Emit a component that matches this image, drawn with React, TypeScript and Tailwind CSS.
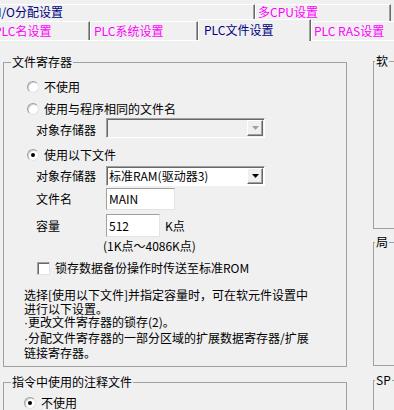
import React from "react";

const FONT = { fontFamily: '"Noto Sans CJK SC", "Noto Sans", sans-serif' };

function Radio({ checked }: { checked?: boolean }) {
  return (
    <span className="relative inline-block h-[12px] w-[12px] shrink-0 rounded-full border border-t-[#a0a0a0] border-l-[#a0a0a0] border-b-[#e3e3e3] border-r-[#e3e3e3] bg-white shadow-[inset_1px_1px_0_#d0d0d0]">
      {checked && <span className="absolute left-[3px] top-[3px] h-[4px] w-[4px] rounded-full bg-black" />}
    </span>
  );
}

function Combo({ text, disabled }: { text?: string; disabled?: boolean }) {
  return (
    <div
      className={
        "flex h-[20px] w-[159px] items-center border border-t-[#a0a0a0] border-l-[#a0a0a0] border-b-white border-r-white shadow-[inset_1px_1px_0_#696969] " +
        (disabled ? "bg-[#f0f0f0]" : "bg-white")
      }
    >
      <span className="flex-1 pl-[2px] text-[12px] leading-[14px]">{text}</span>
      <span className="mr-[1px] flex h-[16px] w-[16px] items-center justify-center border border-t-white border-l-white border-b-[#696969] border-r-[#696969] bg-[#f0f0f0] shadow-[inset_-1px_-1px_0_#a0a0a0]">
        <svg width="7" height="4" viewBox="0 0 7 4">
          <polygon points="0,0 7,0 3.5,4" fill={disabled ? "#a0a0a0" : "#000"} />
        </svg>
      </span>
    </div>
  );
}

function Input({ text, w, h }: { text: string; w: string; h: string }) {
  return (
    <div className={"flex items-center border border-t-[#a0a0a0] border-l-[#a0a0a0] border-b-[#e3e3e3] border-r-[#e3e3e3] bg-white pl-[2px] text-[12px] leading-[14px] " + w + " " + h}>
      {text}
    </div>
  );
}

function Group({ title, className, titleClass, children }: { title: string; className: string; titleClass?: string; children?: React.ReactNode }) {
  return (
    <div className={"relative shrink-0 border border-[#a0a0a0] " + className}>
      <span className={"absolute top-[-9px] bg-[#f0f0f0] px-[1px] text-[12px] leading-[16px] text-black whitespace-nowrap " + (titleClass ?? "left-[7px]")}>{title}</span>
      {children}
    </div>
  );
}

const tabBase =
  "flex items-end shrink-0 border-t border-l border-t-white border-l-white border-r border-r-[#696969] shadow-[inset_-1px_0_0_#a0a0a0] bg-[#f0f0f0] text-[12px] leading-[16px] whitespace-nowrap pb-[1px]";

export default function App() {
  return (
    <div className="relative h-[410px] w-[394px] overflow-hidden bg-[#f0f0f0] text-black" style={FONT}>
      {/* tabs */}
      <div className="h-[4px]" />
      <div className="flex h-[17px]">
        <div className={tabBase + " ml-[-8px] w-[263px] pl-[5px] text-[#000080]"}>I/O分配设置</div>
        <div className={tabBase + " w-[136px] pl-[2px] text-[#ff00ff]"}>多CPU设置</div>
      </div>
      <div className="relative flex h-[19px]">
        <div className={tabBase + " ml-[-10px] w-[100px] pl-[3px] text-[#ff00ff]"}>PLC名设置</div>
        <div className={tabBase + " w-[108px] pl-[3px] text-[#ff00ff]"}>PLC系统设置</div>
        <div className={tabBase + " relative z-10 mt-[-2px] h-[22px] w-[113px] pl-[5px] pb-[3px] text-[#000080]"}>PLC文件设置</div>
        <div className={tabBase + " w-[100px] pl-[2px] text-[#ff00ff]"}>PLC RAS设置</div>
      </div>
      <div className="h-[1px] bg-white" />

      {/* content */}
      <div className="flex gap-[26px] pl-[3px]">
        <div className="flex w-[344px] shrink-0 flex-col">
          <Group title="文件寄存器" className="mt-[21px] h-[305px] w-[344px]">
            <div className="flex flex-col pt-[15px] text-[12px]">
              <div className="ml-[23px] flex h-[18px] items-center gap-[5px]">
                <Radio />
                <span className="leading-[14px]">不使用</span>
              </div>
              <div className="ml-[23px] mt-[4px] flex h-[18px] items-center gap-[5px]">
                <Radio />
                <span className="leading-[14px]">使用与程序相同的文件名</span>
              </div>
              <div className="ml-[32px] flex h-[20px] items-center">
                <span className="w-[70px] leading-[14px] pt-[3px]">对象存储器</span>
                <Combo disabled />
              </div>
              <div className="ml-[23px] mt-[8px] flex h-[18px] items-center gap-[5px]">
                <Radio checked />
                <span className="leading-[14px]">使用以下文件</span>
              </div>
              <div className="ml-[32px] mt-[2px] flex h-[20px] items-center">
                <span className="w-[70px] leading-[14px]">对象存储器</span>
                <Combo text="标准RAM(驱动器3)" />
              </div>
              <div className="ml-[32px] mt-[2px] flex h-[22px] items-center">
                <span className="w-[70px] leading-[14px]">文件名</span>
                <Input text="MAIN" w="w-[69px]" h="h-[22px]" />
              </div>
              <div className="ml-[32px] mt-[4px] flex h-[23px] items-center">
                <span className="w-[70px] leading-[14px]">容量</span>
                <Input text="512" w="w-[54px]" h="h-[23px]" />
                <span className="ml-[5px] leading-[14px]">K点</span>
              </div>
              <div className="ml-[99px] mt-[1px] flex h-[16px] items-center">
                <span className="leading-[14px]">(1K点～4086K点)</span>
              </div>
              <div className="ml-[33px] mt-[6px] flex h-[16px] items-center gap-[5px]">
                <span className="inline-block h-[13px] w-[13px] shrink-0 border border-t-[#a0a0a0] border-l-[#a0a0a0] border-b-[#e3e3e3] border-r-[#e3e3e3] bg-white shadow-[inset_1px_1px_0_#696969]" />
                <span className="leading-[14px]">锁存数据备份操作时传送至标准ROM</span>
              </div>
              <div className="ml-[20px] mt-[12px] text-[12px] leading-[13.5px]">
                <div>选择[使用以下文件]并指定容量时，可在软元件设置中</div>
                <div>进行以下设置。</div>
                <div>
                  <span style={{ fontFamily: '"Liberation Sans", sans-serif' }}>·</span>更改文件寄存器的锁存(2)。
                </div>
                <div>
                  <span style={{ fontFamily: '"Liberation Sans", sans-serif' }}>·</span>分配文件寄存器的一部分区域的扩展数据寄存器/扩展
                </div>
                <div>链接寄存器。</div>
              </div>
            </div>
          </Group>
          <Group title="指令中使用的注释文件" className="mt-[15px] h-[60px] w-[344px]">
            <div className="ml-[20px] mt-[11px] flex h-[18px] items-center gap-[5px] text-[12px]">
              <Radio checked />
              <span className="leading-[14px]">不使用</span>
            </div>
          </Group>
        </div>
        <div className="flex w-[60px] shrink-0 flex-col">
          <Group title="软" titleClass="left-[1px]" className="mt-[20px] h-[168px] w-[60px]" />
          <Group title="局" titleClass="left-[1px]" className="mt-[13px] h-[124px] w-[60px]" />
          <Group title="SP" titleClass="left-[1px]" className="mt-[14px] h-[60px] w-[60px]" />
        </div>
      </div>
    </div>
  );
}
